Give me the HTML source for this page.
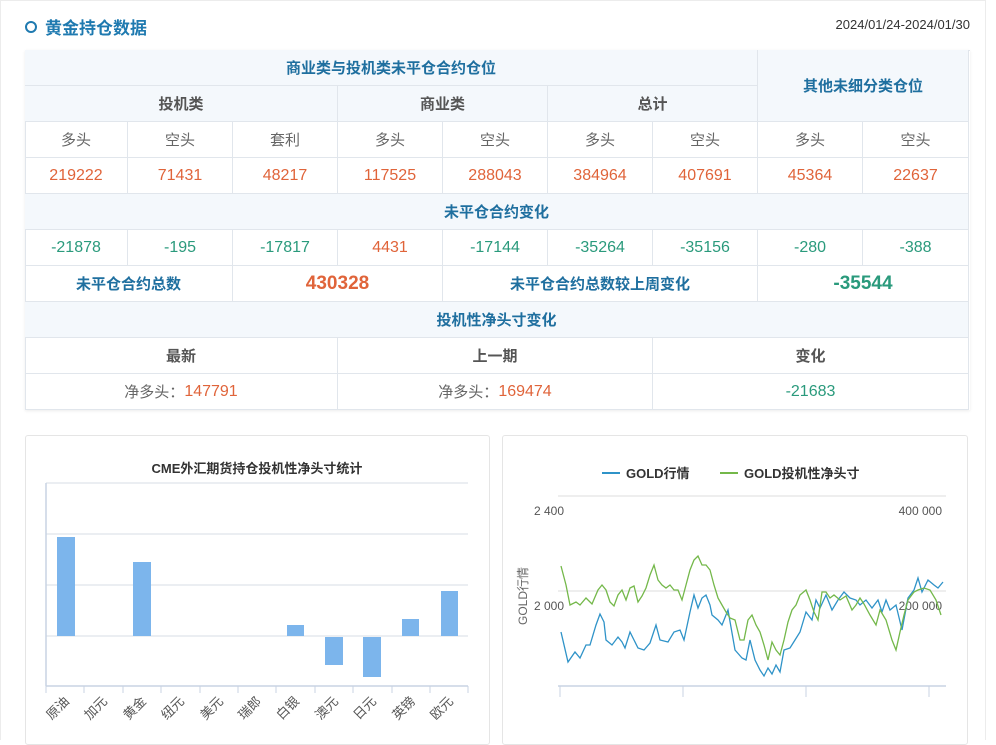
<!DOCTYPE html>
<html><head><meta charset="utf-8"><style>
*{margin:0;padding:0;box-sizing:border-box}
body{width:996px;height:737px;background:#fff;font-family:"Liberation Sans","Noto Sans CJK SC",sans-serif;position:relative;overflow:hidden}
.frame{position:absolute;left:0;top:0;width:986px;height:740px;border:1px solid #ececec;border-bottom:none}
.title{position:absolute;left:25px;top:14px;font-size:17px;font-weight:bold;color:#1f7ab0;display:flex;align-items:center}
.title i{width:12px;height:12px;border:2px solid #1f7ab0;border-radius:50%;margin-right:8px;display:inline-block}
.date{position:absolute;right:26px;top:17px;font-size:13px;color:#333}
.c{position:absolute;display:flex;align-items:center;justify-content:center;border-right:1px solid #e1e6ec;border-bottom:1px solid #e1e6ec;font-size:15px;height:36px}
.h{background:#f4f8fc;color:#1f6f9f;font-weight:bold}
.g{color:#555;font-weight:bold}
.l{color:#666}
.o{color:#e0643a;font-size:16px}
.t{color:#2a9a7c;font-size:16px}
.tbl{position:absolute;left:25px;top:50px;width:945px;height:360px;border-left:1px solid #e1e6ec;border-top:1px solid #e1e6ec;box-shadow:0 1px 3px rgba(0,0,0,.08)}
.panel{position:absolute;top:435px;height:310px;border:1px solid #e5e5e5;border-radius:3px;background:#fff}
</style></head><body>
<div class="frame"></div>
<div class="title"><i></i>黄金持仓数据</div>
<div class="date">2024/01/24-2024/01/30</div>
<div class="tbl"></div>
<div class="c h" style="left:25px;top:50px;width:733px">商业类与投机类未平仓合约仓位</div>
<div class="c h" style="left:758px;top:50px;width:211px;height:72px">其他未细分类仓位</div>
<div class="c h g" style="left:25px;top:86px;width:313px">投机类</div>
<div class="c h g" style="left:338px;top:86px;width:210px">商业类</div>
<div class="c h g" style="left:548px;top:86px;width:210px">总计</div>
<div class="c l" style="left:25px;top:122px;width:103px">多头</div>
<div class="c l" style="left:128px;top:122px;width:105px">空头</div>
<div class="c l" style="left:233px;top:122px;width:105px">套利</div>
<div class="c l" style="left:338px;top:122px;width:105px">多头</div>
<div class="c l" style="left:443px;top:122px;width:105px">空头</div>
<div class="c l" style="left:548px;top:122px;width:105px">多头</div>
<div class="c l" style="left:653px;top:122px;width:105px">空头</div>
<div class="c l" style="left:758px;top:122px;width:105px">多头</div>
<div class="c l" style="left:863px;top:122px;width:106px">空头</div>
<div class="c o" style="left:25px;top:158px;width:103px">219222</div>
<div class="c o" style="left:128px;top:158px;width:105px">71431</div>
<div class="c o" style="left:233px;top:158px;width:105px">48217</div>
<div class="c o" style="left:338px;top:158px;width:105px">117525</div>
<div class="c o" style="left:443px;top:158px;width:105px">288043</div>
<div class="c o" style="left:548px;top:158px;width:105px">384964</div>
<div class="c o" style="left:653px;top:158px;width:105px">407691</div>
<div class="c o" style="left:758px;top:158px;width:105px">45364</div>
<div class="c o" style="left:863px;top:158px;width:106px">22637</div>
<div class="c h" style="left:25px;top:194px;width:944px">未平仓合约变化</div>
<div class="c t" style="left:25px;top:230px;width:103px">-21878</div>
<div class="c t" style="left:128px;top:230px;width:105px">-195</div>
<div class="c t" style="left:233px;top:230px;width:105px">-17817</div>
<div class="c o" style="left:338px;top:230px;width:105px">4431</div>
<div class="c t" style="left:443px;top:230px;width:105px">-17144</div>
<div class="c t" style="left:548px;top:230px;width:105px">-35264</div>
<div class="c t" style="left:653px;top:230px;width:105px">-35156</div>
<div class="c t" style="left:758px;top:230px;width:105px">-280</div>
<div class="c t" style="left:863px;top:230px;width:106px">-388</div>
<div class="c" style="left:25px;top:266px;width:208px;color:#1f6f9f;font-weight:bold">未平仓合约总数</div>
<div class="c o" style="left:233px;top:266px;width:210px;font-size:19px;font-weight:bold">430328</div>
<div class="c" style="left:443px;top:266px;width:315px;color:#1f6f9f;font-weight:bold">未平仓合约总数较上周变化</div>
<div class="c t" style="left:758px;top:266px;width:211px;font-size:19px;font-weight:bold">-35544</div>
<div class="c h" style="left:25px;top:302px;width:944px">投机性净头寸变化</div>
<div class="c g" style="left:25px;top:338px;width:313px">最新</div>
<div class="c g" style="left:338px;top:338px;width:315px">上一期</div>
<div class="c g" style="left:653px;top:338px;width:316px">变化</div>
<div class="c l" style="left:25px;top:374px;width:313px">净多头：<span class="o">147791</span></div>
<div class="c l" style="left:338px;top:374px;width:315px">净多头：<span class="o">169474</span></div>
<div class="c t" style="left:653px;top:374px;width:316px">-21683</div>

<div class="panel" style="left:25px;width:465px"></div>
<div class="panel" style="left:502px;width:466px"></div>
<svg style="position:absolute;left:0;top:0" width="996" height="737" font-family="Liberation Sans,Noto Sans CJK SC,sans-serif">
<text x="257" y="473" font-size="13" font-weight="bold" fill="#333" text-anchor="middle">CME外汇期货持仓投机性净头寸统计</text>
<g stroke="#dfe3ea" stroke-width="1.2">
<line x1="46" y1="483" x2="468" y2="483"/><line x1="46" y1="534" x2="468" y2="534"/><line x1="46" y1="585" x2="468" y2="585"/><line x1="46" y1="636" x2="468" y2="636"/></g>
<line x1="46" y1="686" x2="468" y2="686" stroke="#c8d3e3" stroke-width="1.5"/>
<line x1="46" y1="483" x2="46" y2="686" stroke="#c8d3e3" stroke-width="1.5"/>
<g stroke="#c8d3e3"><line x1="46" y1="686" x2="46" y2="693"/><line x1="84" y1="686" x2="84" y2="693"/><line x1="123" y1="686" x2="123" y2="693"/><line x1="161" y1="686" x2="161" y2="693"/><line x1="200" y1="686" x2="200" y2="693"/><line x1="238" y1="686" x2="238" y2="693"/><line x1="276" y1="686" x2="276" y2="693"/><line x1="315" y1="686" x2="315" y2="693"/><line x1="353" y1="686" x2="353" y2="693"/><line x1="392" y1="686" x2="392" y2="693"/><line x1="430" y1="686" x2="430" y2="693"/><line x1="468" y1="686" x2="468" y2="693"/></g>
<g fill="#7cb5ec">
<rect x="57" y="537" width="18" height="99"/><rect x="133" y="562" width="18" height="74"/><rect x="287" y="625" width="17" height="11"/><rect x="325" y="637" width="18" height="28"/><rect x="363" y="637" width="18" height="40"/><rect x="402" y="619" width="17" height="17"/><rect x="441" y="591" width="17" height="45"/></g>
<g font-size="13" fill="#555" text-anchor="end">
<text transform="translate(70,702) rotate(-45)">原油</text><text transform="translate(108,702) rotate(-45)">加元</text><text transform="translate(147,702) rotate(-45)">黄金</text><text transform="translate(185,702) rotate(-45)">纽元</text><text transform="translate(224,702) rotate(-45)">美元</text><text transform="translate(262,702) rotate(-45)">瑞郎</text><text transform="translate(300,702) rotate(-45)">白银</text><text transform="translate(339,702) rotate(-45)">澳元</text><text transform="translate(377,702) rotate(-45)">日元</text><text transform="translate(416,702) rotate(-45)">英镑</text><text transform="translate(454,702) rotate(-45)">欧元</text></g>

<line x1="602" y1="473" x2="620" y2="473" stroke="#2f93c8" stroke-width="2"/>
<text x="626" y="478" font-size="13" font-weight="bold" fill="#333">GOLD行情</text>
<line x1="720" y1="473" x2="738" y2="473" stroke="#74b84a" stroke-width="2"/>
<text x="744" y="478" font-size="13" font-weight="bold" fill="#333">GOLD投机性净头寸</text>
<line x1="558" y1="496" x2="946" y2="496" stroke="#ddd"/>
<line x1="558" y1="591" x2="946" y2="591" stroke="#ddd"/>
<line x1="558" y1="686" x2="946" y2="686" stroke="#c8d3e3" stroke-width="1.5"/>
<g stroke="#c8d3e3"><line x1="560" y1="686" x2="560" y2="697"/><line x1="683" y1="686" x2="683" y2="697"/><line x1="806" y1="686" x2="806" y2="697"/><line x1="929" y1="686" x2="929" y2="697"/></g>
<g font-size="12" fill="#555"><text x="534" y="515">2 400</text><text x="534" y="610">2 000</text><text x="942" y="515" text-anchor="end">400 000</text><text x="942" y="610" text-anchor="end">200 000</text></g>
<text transform="translate(527,625) rotate(-90)" font-size="12" fill="#666">GOLD行情</text>
<polyline fill="none" stroke="#2f93c8" stroke-width="1.3" points="561,632 568,662 575,652 580,658 586,645 590,645 596,625 600,614 604,622 606,640 612,645 618,637 622,642 625,648 630,632 634,640 638,648 644,650 650,643 656,625 660,640 668,642 674,632 680,630 684,640 690,612 694,595 698,608 702,598 706,595 710,605 712,615 718,620 722,625 728,610 735,650 742,658 746,660 750,640 755,660 760,670 764,676 768,668 772,674 776,665 780,672 784,650 790,648 795,640 800,632 806,612 812,620 816,600 820,608 826,595 832,610 838,600 844,592 850,598 856,600 860,605 866,600 872,608 878,600 882,612 886,600 890,610 896,605 902,630 908,598 914,590 918,578 922,592 928,580 934,585 938,588 943,582"/>
<polyline fill="none" stroke="#74b84a" stroke-width="1.3" points="561,566 566,585 570,605 576,602 580,605 586,598 592,604 598,590 602,585 606,590 610,602 614,606 618,595 622,590 626,600 630,588 634,586 638,602 642,596 646,588 650,575 654,565 658,580 662,585 666,588 670,585 674,590 678,590 682,600 686,585 690,570 694,560 698,556 702,565 706,565 710,570 714,585 718,598 722,605 726,612 730,618 735,620 740,640 744,640 748,620 752,615 756,625 760,632 764,645 768,660 772,642 776,650 780,655 784,640 788,622 792,610 796,605 800,595 806,590 810,600 814,612 818,620 822,592 826,592 830,598 834,595 840,600 846,596 852,610 856,605 860,598 864,604 870,615 876,625 880,610 886,620 892,640 896,650 900,632 904,615 908,600 914,592 918,590 924,588 930,590 936,600 941,615"/>
</svg>
</body></html>
